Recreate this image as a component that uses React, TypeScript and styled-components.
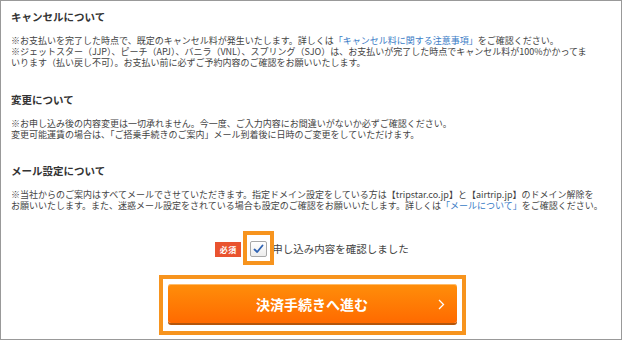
import React from 'react';
import styled, { createGlobalStyle } from 'styled-components';

const GlobalStyle = createGlobalStyle`
  html, body {
    margin: 0;
    padding: 0;
    background: #fff;
  }
  body {
    font-family: 'Noto Sans CJK JP', 'Noto Sans', sans-serif;
    color: #333;
  }
`;

const Frame = styled.div`
  box-sizing: border-box;
  width: 622px;
  height: 340px;
  border: 1px solid #999;
  padding: 9px 6px 0 10px;
  overflow: hidden;
`;

const Section = styled.section`
  & + & {
    margin-top: 24px;
  }
`;

const Heading = styled.h2`
  margin: 0;
  font-size: 10.5px;
  line-height: 14px;
  font-weight: 700;
  color: #333;
`;

const Body = styled.div`
  margin-top: 11px;
  font-size: 9px;
  line-height: 11.2px;
  color: #444;
`;

const Line = styled.p`
  margin: 0;
  white-space: nowrap;
`;

const Link = styled.span`
  color: #3a7cc6;
`;

const ConfirmRow = styled.div`
  display: flex;
  align-items: center;
  justify-content: center;
  margin-top: 30px;
  height: 16px;
  padding-right: 2px;
`;

const Required = styled.span`
  display: flex;
  align-items: center;
  justify-content: center;
  width: 26px;
  height: 15px;
  background: #e9532f;
  color: #fff;
  font-size: 8px;
  font-weight: 700;
  letter-spacing: 0.5px;
`;

const CheckWrap = styled.div`
  position: relative;
  margin-left: 9px;
`;

const CheckBox = styled.div`
  box-sizing: border-box;
  display: flex;
  align-items: center;
  justify-content: center;
  width: 17px;
  height: 16px;
  border: 1px solid #a8a8a8;
  border-radius: 2px;
  background: linear-gradient(#fff, #ececec);
`;

const Highlight = styled.div`
  position: absolute;
  top: -10px;
  bottom: -8px;
  left: -7px;
  right: -7px;
  border: 4px solid #f7941e;
  pointer-events: none;
`;

const ConfirmLabel = styled.span`
  margin-left: 5px;
  font-size: 10.5px;
  line-height: 16px;
  color: #444;
`;

const ButtonFrame = styled.div`
  box-sizing: border-box;
  width: 307px;
  height: 60px;
  margin: 18px auto 0;
  position: relative;
  left: -1px;
  border: 4px solid #f7941e;
  padding: 5px 5px 0 5px;
`;

const SubmitButton = styled.button`
  position: relative;
  display: flex;
  align-items: center;
  justify-content: center;
  width: 289px;
  height: 39px;
  padding: 0;
  border: none;
  border-radius: 3px;
  background: linear-gradient(#ff8e0a, #ff6a00);
  box-shadow: 0 2px 0 #b4560c, inset 0 1px 0 rgba(255, 220, 170, 0.6);
  color: #fff;
  font-family: 'Noto Sans CJK JP', 'Noto Sans', sans-serif;
  font-size: 14px;
  font-weight: 700;
  cursor: pointer;
`;

const Chevron = styled.svg`
  position: absolute;
  right: 12px;
  top: 15px;
`;

const notes = [
  {
    title: 'キャンセルについて',
    lines: [
      <>
        ※お支払いを完了した時点で、既定のキャンセル料が発生いたします。詳しくは
        <Link>「キャンセル料に関する注意事項」</Link>をご確認ください。
      </>,
      <>
        ※ジェットスター（JJP）、ピーチ（APJ）、バニラ（VNL）、スプリング（SJO）は、お支払いが完了した時点でキャンセル料が100%かかってま
      </>,
      <>いります（払い戻し不可）。お支払い前に必ずご予約内容のご確認をお願いいたします。</>,
    ],
  },
  {
    title: '変更について',
    lines: [
      <>※お申し込み後の内容変更は一切承れません。今一度、ご入力内容にお間違いがないか必ずご確認ください。</>,
      <>変更可能運賃の場合は、「ご搭乗手続きのご案内」メール到着後に日時のご変更をしていただけます。</>,
    ],
  },
  {
    title: 'メール設定について',
    lines: [
      <>
        ※当社からのご案内はすべてメールでさせていただきます。指定ドメイン設定をしている方は【tripstar.co.jp】と【airtrip.jp】のドメイン解除を
      </>,
      <>
        お願いいたします。また、迷惑メール設定をされている場合も設定のご確認をお願いいたします。詳しくは
        <Link>「メールについて」</Link>をご確認ください。
      </>,
    ],
  },
];

const App = () => {
  return (
    <>
      <GlobalStyle />
      <Frame>
        {notes.map((note) => (
          <Section key={note.title}>
            <Heading>{note.title}</Heading>
            <Body>
              {note.lines.map((line, i) => (
                <Line key={i}>{line}</Line>
              ))}
            </Body>
          </Section>
        ))}

        <ConfirmRow>
          <Required>必須</Required>
          <CheckWrap>
            <CheckBox>
              <svg width="11" height="10" viewBox="0 0 11 10">
                <polyline
                  points="1.5,5.5 4.2,8 9.5,1.5"
                  fill="none"
                  stroke="#2f63b3"
                  strokeWidth="1.8"
                  strokeLinecap="round"
                  strokeLinejoin="round"
                />
              </svg>
            </CheckBox>
            <Highlight />
          </CheckWrap>
          <ConfirmLabel>申し込み内容を確認しました</ConfirmLabel>
        </ConfirmRow>

        <ButtonFrame>
          <SubmitButton type="button">
            決済手続きへ進む
            <Chevron width="7" height="11" viewBox="0 0 7 11">
              <polyline
                points="1,1 5.5,5.5 1,10"
                fill="none"
                stroke="#fff"
                strokeWidth="1.3"
              />
            </Chevron>
          </SubmitButton>
        </ButtonFrame>
      </Frame>
    </>
  );
};

export default App;
